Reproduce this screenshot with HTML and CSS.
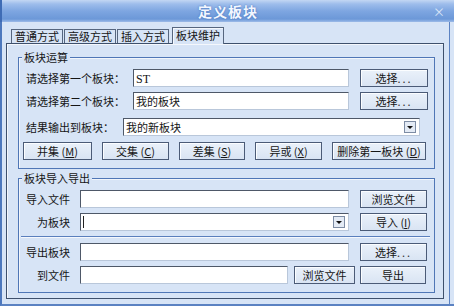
FILE: index.html
```html
<!DOCTYPE html>
<html lang="zh-CN">
<head>
  <meta charset="UTF-8">
  <title>定义板块</title>
  <link rel="stylesheet" href="styles.css">
</head>
<body>
  <div class="window">
    <div class="titlebar">
      <span class="title">定义板块</span>
      <span class="close">×</span>
    </div>
    <div class="client">
      <div class="tabs">
        <div class="tab">普通方式</div>
        <div class="tab">高级方式</div>
        <div class="tab">插入方式</div>
        <div class="tab active">板块维护</div>
      </div>
      <div class="panel">
        <fieldset class="group ops">
          <legend>板块运算</legend>
          <div class="row">
            <span class="lbl">请选择第一个板块：</span>
            <div class="input"><span class="latin">ST</span></div>
            <button class="btn pick">选择<span class="dots">...</span></button>
          </div>
          <div class="row">
            <span class="lbl">请选择第二个板块：</span>
            <div class="input">我的板块</div>
            <button class="btn pick">选择<span class="dots">...</span></button>
          </div>
          <div class="row row-out">
            <span class="lbl">结果输出到板块：</span>
            <div class="combo wide">
              <span class="combo-text">我的新板块</span>
              <span class="arrow"></span>
            </div>
          </div>
          <div class="row actions">
            <button class="btn op1">并集 (<u>M</u>)</button>
            <button class="btn op2">交集 (<u>C</u>)</button>
            <button class="btn op3">差集 (<u>S</u>)</button>
            <button class="btn op4">异或 (<u>X</u>)</button>
            <button class="btn op5">删除第一板块 (<u>D</u>)</button>
          </div>
        </fieldset>

        <fieldset class="group io">
          <legend>板块导入导出</legend>
          <div class="row">
            <span class="lbl">导入文件</span>
            <div class="input"></div>
            <button class="btn pick">浏览文件</button>
          </div>
          <div class="row">
            <span class="lbl">为板块</span>
            <div class="combo">
              <span class="combo-text"><span class="caret"></span></span>
              <span class="arrow"></span>
            </div>
            <button class="btn pick">导入 (<u>I</u>)</button>
          </div>
          <div class="sep"></div>
          <div class="row">
            <span class="lbl">导出板块</span>
            <div class="input"></div>
            <button class="btn pick">选择<span class="dots">...</span></button>
          </div>
          <div class="row">
            <span class="lbl">到文件</span>
            <div class="input short"></div>
            <button class="btn browse">浏览文件</button>
            <button class="btn export">导出</button>
          </div>
        </fieldset>
      </div>
    </div>
  </div>
</body>
</html>
```

FILE: styles.css
```css
:root {
  --bg: #d7e4f6;
  --group-line: #4f76b6;
  --frame: #4d78bd;
  --btn-edge: #4b5b77;
  --field-dark: #4e5868;
  --field-light: #b9c7da;
}
* {
  box-sizing: border-box;
}
body {
  margin: 0;
  font-family: "Noto Sans CJK SC", "DejaVu Sans", sans-serif;
  font-size: 11px;
  color: #151515;
}
.window {
  width: 454px;
  height: 306px;
  background: var(--bg);
  display: flex;
  flex-direction: column;
  overflow: hidden;
}
.titlebar {
  flex: none;
  height: 22px;
  display: grid;
  grid-template-columns: 1fr auto 1fr;
  align-items: center;
  background: linear-gradient(#c3d7f3 0, #9ebdeb 4px, #7ea6e1 11px, #6c98d8 19px, #9dbbe8 22px);
  border-left: 2px solid #3f6cb5;
}
.title {
  grid-column: 2;
  font-size: 14px;
  font-weight: bold;
  letter-spacing: 1px;
  color: #f3f7ff;
  text-shadow: 0 0 2px #3f6db8;
}
.close {
  justify-self: end;
  margin-right: 9px;
  font-size: 12px;
  color: #dbe7f8;
}
.client {
  flex: 1;
  display: flex;
  flex-direction: column;
  padding: 5px 10px 5px 4px;
  border-left: 2px solid var(--frame);
  border-bottom: 2px solid #5b82c2;
  box-shadow: inset -4px 0 0 var(--bg), inset -5px 0 0 #5b82c2;
}
.tabs {
  flex: none;
  height: 16px;
  display: flex;
  align-items: flex-end;
  gap: 1px;
  margin-left: 5px;
  position: relative;
  z-index: 1;
}
.tab {
  height: 14px;
  padding: 0 3px;
  line-height: 13px;
  border: 1px solid #56667f;
  border-bottom: none;
  background: var(--bg);
  white-space: nowrap;
}
.tab.active {
  height: 17px;
  margin-bottom: -1px;
  margin-left: 2px;
  line-height: 15px;
  box-shadow: inset 1px 1px 0 #f4f7fc;
}
.panel {
  flex: 1;
  border: 1px solid #3e506c;
  box-shadow: inset 1px 1px 0 #f4f7fc;
  padding: 6px 8px 0 11px;
  display: flex;
  flex-direction: column;
}
.group {
  margin: 0;
  padding: 5px 6px 8px 7px;
  border: 1px solid var(--group-line);
  box-shadow: inset 1px 1px 0 #f1f5fb;
  min-width: 0;
}
.group legend {
  margin-left: -4px;
  padding: 0 2px;
  line-height: 14px;
  background: var(--bg);
}
.io {
  margin-top: 2px;
}
.row {
  display: flex;
  align-items: center;
  height: 18px;
}
.row + .row {
  margin-top: 5px;
}
.ops .row-out {
  margin-top: 8px;
}
.ops .actions {
  margin: 6px 2px 0 -3px;
  justify-content: space-between;
}
.lbl {
  flex: none;
  white-space: nowrap;
}
.ops .lbl {
  width: 107px;
}
.ops .row-out .lbl {
  width: 97px;
}
.io .lbl {
  width: 54px;
  padding-right: 10px;
  text-align: right;
}
.input,
.combo {
  height: 18px;
  background: #fff;
  border: 1px solid var(--field-light);
  border-top-color: var(--field-dark);
  border-left-color: var(--field-dark);
  padding-left: 2px;
  line-height: 16px;
  white-space: nowrap;
}
.ops .input {
  width: 216px;
}
.io .input,
.io .combo {
  width: 269px;
}
.io .input.short {
  width: 208px;
}
.latin {
  font-family: "Liberation Serif", serif;
  font-size: 12px;
}
.combo {
  display: flex;
  align-items: center;
  padding-right: 3px;
}
.combo.wide {
  width: 297px;
}
.combo-text {
  flex: 1;
  display: flex;
  align-items: center;
}
.caret {
  width: 1px;
  height: 12px;
  background: #222;
}
.arrow {
  width: 12px;
  height: 12px;
  background: #e4ebf5;
  border: 1px solid #7d8ca4;
  display: flex;
  align-items: center;
  justify-content: center;
}
.arrow::after {
  content: "";
  border-left: 3px solid transparent;
  border-right: 3px solid transparent;
  border-top: 3px solid #111;
}
.btn {
  height: 18px;
  padding: 0;
  font: inherit;
  color: #151515;
  background: linear-gradient(#eaf1fa, #d9e4f3);
  border: 1px solid var(--btn-edge);
  box-shadow: inset 1px 1px 0 #fbfdff;
  white-space: nowrap;
}
.btn u {
  text-decoration: underline;
}
.dots {
  letter-spacing: 2px;
  color: #333;
}
.pick {
  width: 68px;
  margin-left: 11px;
}
.io .pick {
  width: 67px;
}
.op1 { width: 69px; }
.op2 { width: 67px; }
.op3 { width: 66px; }
.op4 { width: 67px; }
.op5 { width: 94px; }
.browse {
  width: 61px;
  margin-left: 6px;
}
.export {
  width: 66px;
  margin-left: 5px;
}
.sep {
  height: 2px;
  margin: 5px -2px 0 -5px;
  border-top: 1px solid #5a7fbd;
  border-bottom: 1px solid #f5f8fd;
}
.sep + .row {
  margin-top: 5px;
}
```
